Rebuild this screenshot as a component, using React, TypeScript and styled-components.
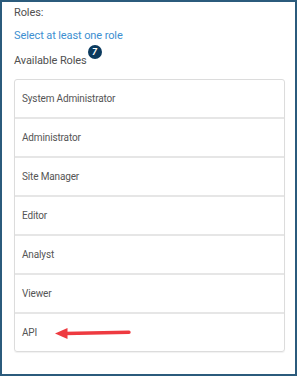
import React from 'react';
import styled, { createGlobalStyle } from 'styled-components';

const GlobalStyle = createGlobalStyle`
  html, body {
    margin: 0;
    padding: 0;
    background: #ffffff;
  }
  body {
    font-family: Roboto, "Liberation Sans", Arial, sans-serif;
  }
`;

const Frame = styled.div`
  box-sizing: border-box;
  width: 297px;
  height: 376px;
  border: 2px solid #2b5b7c;
  background: #ffffff;
  padding: 3px 10px 0 12px;
  display: flex;
  flex-direction: column;
`;

const Label = styled.div`
  font-size: 11px;
  line-height: 16px;
  letter-spacing: -0.1px;
  color: #505050;
`;

const Hint = styled.div`
  margin-top: 7px;
  font-size: 11px;
  line-height: 16px;
  letter-spacing: -0.1px;
  color: #3d8fd1;
`;

const Heading = styled.div`
  margin-top: 9px;
  font-size: 11px;
  line-height: 16px;
  letter-spacing: -0.1px;
  color: #505050;
  display: flex;
  align-items: flex-start;
`;

const Badge = styled.span`
  position: relative;
  top: -8px;
  left: 1px;
  width: 14px;
  height: 14px;
  border-radius: 50%;
  background: #0b3a5e;
  color: #ffffff;
  font-size: 9px;
  font-weight: 700;
  font-style: italic;
  line-height: 14px;
  text-align: center;
  letter-spacing: 0;
`;

const RoleList = styled.ul`
  list-style: none;
  margin: 10px 0 0 0;
  padding: 0;
  width: 271px;
  box-sizing: border-box;
  border: 1px solid #dcdcdc;
  border-radius: 3px;
  box-shadow: 0 1px 1px rgba(0, 0, 0, 0.06);
`;

const RoleRow = styled.li`
  height: 37px;
  display: flex;
  align-items: center;
  padding-left: 7px;
  font-size: 10px;
  letter-spacing: -0.15px;
  color: #555555;
  border-top: ${p => (p.$first ? 'none' : '2px solid #e6e6e6')};
`;

const Arrow = styled.svg`
  margin-left: 18px;
  flex: none;
`;

const roles = [
  'System Administrator',
  'Administrator',
  'Site Manager',
  'Editor',
  'Analyst',
  'Viewer',
  'API',
];

const PointerArrow = () => (
  <Arrow width="76" height="12" viewBox="0 0 76 12">
    <path d="M0 6.5 L12.5 1 L12.5 12 Z" fill="#ee3a40" />
    <path d="M10 6.5 L74 5.2" stroke="#ee3a40" strokeWidth="3.4" strokeLinecap="round" />
  </Arrow>
);

export default function App() {
  return (
    <>
      <GlobalStyle />
      <Frame>
        <Label>Roles:</Label>
        <Hint>Select at least one role</Hint>
        <Heading>
          Available Roles
          <Badge>7</Badge>
        </Heading>
        <RoleList>
          {roles.map((role, i) => (
            <RoleRow key={role} $first={i === 0}>
              {role}
              {role === 'API' && <PointerArrow />}
            </RoleRow>
          ))}
        </RoleList>
      </Frame>
    </>
  );
}
